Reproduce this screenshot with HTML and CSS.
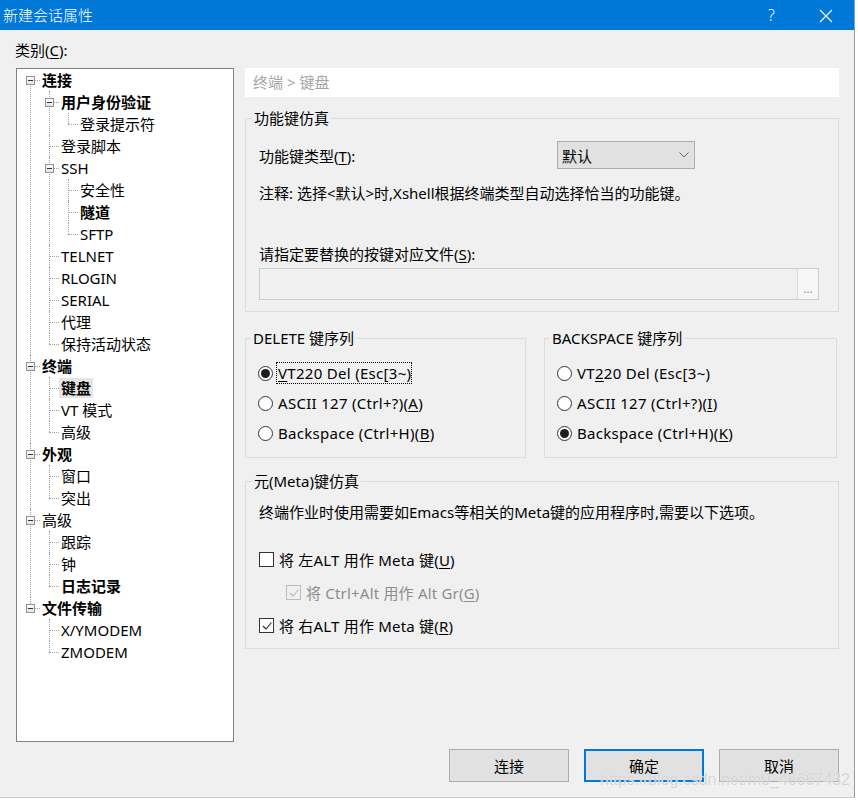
FILE: index.html
```html
<!DOCTYPE html>
<html lang="zh-CN">
<head>
<meta charset="utf-8">
<title>新建会话属性</title>
<link rel="stylesheet" href="styles.css">
</head>
<body>
<div class="window">
  <div class="titlebar">
    <span class="title">新建会话属性</span>
    <span class="help">?</span>
    <svg class="close" width="14" height="14" viewBox="0 0 14 14"><path d="M1 1 L13 13 M13 1 L1 13" stroke="#fff" stroke-width="1.1" fill="none"/></svg>
  </div>
  <div class="content">
    <div class="cat-label">类别(<u>C</u>):</div>
    <div class="panes">
      <div class="tree">
        <ul class="tree-root">
          <li>
            <div class="row"><span class="tog"></span><span class="txt b">连接</span></div>
            <ul>
              <li>
                <div class="row"><span class="tog"></span><span class="txt b">用户身份验证</span></div>
                <ul>
                  <li class="last"><div class="row"><span class="tog leaf"></span><span class="txt">登录提示符</span></div></li>
                </ul>
              </li>
              <li><div class="row"><span class="tog leaf"></span><span class="txt">登录脚本</span></div></li>
              <li>
                <div class="row"><span class="tog"></span><span class="txt">SSH</span></div>
                <ul>
                  <li><div class="row"><span class="tog leaf"></span><span class="txt">安全性</span></div></li>
                  <li><div class="row"><span class="tog leaf"></span><span class="txt b">隧道</span></div></li>
                  <li class="last"><div class="row"><span class="tog leaf"></span><span class="txt">SFTP</span></div></li>
                </ul>
              </li>
              <li><div class="row"><span class="tog leaf"></span><span class="txt">TELNET</span></div></li>
              <li><div class="row"><span class="tog leaf"></span><span class="txt">RLOGIN</span></div></li>
              <li><div class="row"><span class="tog leaf"></span><span class="txt">SERIAL</span></div></li>
              <li><div class="row"><span class="tog leaf"></span><span class="txt">代理</span></div></li>
              <li class="last"><div class="row"><span class="tog leaf"></span><span class="txt">保持活动状态</span></div></li>
            </ul>
          </li>
          <li>
            <div class="row"><span class="tog"></span><span class="txt b">终端</span></div>
            <ul>
              <li><div class="row"><span class="tog leaf"></span><span class="txt b sel">键盘</span></div></li>
              <li><div class="row"><span class="tog leaf"></span><span class="txt">VT 模式</span></div></li>
              <li class="last"><div class="row"><span class="tog leaf"></span><span class="txt">高级</span></div></li>
            </ul>
          </li>
          <li>
            <div class="row"><span class="tog"></span><span class="txt b">外观</span></div>
            <ul>
              <li><div class="row"><span class="tog leaf"></span><span class="txt">窗口</span></div></li>
              <li class="last"><div class="row"><span class="tog leaf"></span><span class="txt">突出</span></div></li>
            </ul>
          </li>
          <li>
            <div class="row"><span class="tog"></span><span class="txt">高级</span></div>
            <ul>
              <li><div class="row"><span class="tog leaf"></span><span class="txt">跟踪</span></div></li>
              <li><div class="row"><span class="tog leaf"></span><span class="txt">钟</span></div></li>
              <li class="last"><div class="row"><span class="tog leaf"></span><span class="txt b">日志记录</span></div></li>
            </ul>
          </li>
          <li class="last">
            <div class="row"><span class="tog"></span><span class="txt b">文件传输</span></div>
            <ul>
              <li><div class="row"><span class="tog leaf"></span><span class="txt">X/YMODEM</span></div></li>
              <li class="last"><div class="row"><span class="tog leaf"></span><span class="txt">ZMODEM</span></div></li>
            </ul>
          </li>
        </ul>
      </div>

      <div class="panel">
        <div class="crumb">终端 &gt; 键盘</div>

        <fieldset class="group g-func">
          <legend>功能键仿真</legend>
          <div class="type-row">
            <span>功能键类型(<u>T</u>):</span>
            <div class="select">
              <span>默认</span>
              <svg width="10" height="6" viewBox="0 0 10 6"><path d="M0.5 0.5 L5 5 L9.5 0.5" stroke="#666" stroke-width="1" fill="none"/></svg>
            </div>
          </div>
          <div class="note">注释: 选择&lt;默认&gt;时,Xshell根据终端类型自动选择恰当的功能键。</div>
          <div class="file-label">请指定要替换的按键对应文件(<u>S</u>):</div>
          <div class="file-input">
            <span class="field"></span>
            <span class="browse">...</span>
          </div>
        </fieldset>

        <div class="seq-row">
          <fieldset class="group g-seq">
            <legend>DELETE 键序列</legend>
            <div class="opt"><span class="radio on"></span><span class="focus"><u>V</u>T220 Del (Esc[3~)</span></div>
            <div class="opt"><span class="radio"></span><span>ASCII 127 (Ctrl+?)(<u>A</u>)</span></div>
            <div class="opt"><span class="radio"></span><span>Backspace (Ctrl+H)(<u>B</u>)</span></div>
          </fieldset>
          <fieldset class="group g-seq">
            <legend>BACKSPACE 键序列</legend>
            <div class="opt"><span class="radio"></span><span>VT<u>2</u>20 Del (Esc[3~)</span></div>
            <div class="opt"><span class="radio"></span><span>ASCII 127 (Ctrl+?)(<u>I</u>)</span></div>
            <div class="opt"><span class="radio on"></span><span>Backspace (Ctrl+H)(<u>K</u>)</span></div>
          </fieldset>
        </div>

        <fieldset class="group g-meta">
          <legend>元(Meta)键仿真</legend>
          <div class="note">终端作业时使用需要如Emacs等相关的Meta键的应用程序时,需要以下选项。</div>
          <div class="checks">
            <div class="chk-row"><span class="chk"></span><span>将 左ALT 用作 Meta 键(<u>U</u>)</span></div>
            <div class="chk-row sub disabled"><span class="chk"><svg width="12" height="12" viewBox="0 0 12 12"><path d="M2 6 L5 9 L10.5 2.5" stroke="#b5b5b5" stroke-width="1.1" fill="none"/></svg></span><span>将 Ctrl+Alt 用作 Alt Gr(<u>G</u>)</span></div>
            <div class="chk-row"><span class="chk"><svg width="12" height="12" viewBox="0 0 12 12"><path d="M2 6 L5 9 L10.5 2.5" stroke="#222" stroke-width="1.1" fill="none"/></svg></span><span>将 右ALT 用作 Meta 键(<u>R</u>)</span></div>
          </div>
        </fieldset>
      </div>
    </div>

    <div class="buttons">
      <button class="btn">连接</button>
      <button class="btn default">确定</button>
      <button class="btn">取消</button>
    </div>
  </div>
  <div class="watermark">https://blog.csdn.net/m0_46667432</div>
</div>
</body>
</html>
```

FILE: styles.css
```css
* { box-sizing: border-box; }

html, body {
  margin: 0;
  padding: 0;
  background: #ffffff;
}

body {
  font-family: "Noto Sans", "Noto Sans CJK SC", sans-serif;
  font-size: 15px;
  color: #000;
}

u { text-underline-offset: 2px; text-decoration-thickness: 1px; }

.window {
  position: relative;
  width: 855px;
  height: 798px;
  background: #f0f0f0;
  border-right: 1px solid #8d9aa8;
  border-bottom: 1px solid #c9c9c9;
  overflow: hidden;
}

/* title bar */
.titlebar {
  height: 30px;
  background: #0078d7;
  color: #fff;
  display: flex;
  align-items: center;
  padding-left: 3px;
}
.title {
  font-size: 15px;
  line-height: 30px;
  flex: 1;
  font-family: "Noto Sans CJK SC", sans-serif;
  font-weight: 300;
}
.help {
  font-family: "Noto Sans", sans-serif;
  font-weight: 300;
  font-size: 16px;
  width: 51px;
}
.close {
  margin-right: 21px;
  margin-top: 1px;
}

/* content */
.content {
  padding: 0 15px 0 16px;
}
.cat-label {
  line-height: 20px;
  margin-top: 10px;
  margin-bottom: 8px;
  margin-left: -1px;
}

.panes {
  display: flex;
  gap: 11px;
}

/* tree */
.tree {
  width: 218px;
  height: 674px;
  background: #fff;
  border: 1px solid #838383;
  overflow: hidden;
}
.tree ul {
  list-style: none;
  margin: 0;
  padding: 0;
}
.tree ul ul {
  padding-left: 19px;
}
.tree li {
  position: relative;
}
.tree li::before {
  content: "";
  position: absolute;
  left: 13px;
  top: 11px;
  width: 10px;
  border-top: 1px dotted #a0a0a0;
}
.tree li::after {
  content: "";
  position: absolute;
  left: 13px;
  top: 0;
  bottom: 0;
  border-left: 1px dotted #a0a0a0;
}
.tree li.last::after {
  bottom: auto;
  height: 11px;
}
.tree-root > li:first-child::after {
  top: 11px;
}
.row {
  height: 22px;
  display: flex;
  align-items: center;
  padding-left: 9px;
  position: relative;
  z-index: 1;
}
.tog {
  position: relative;
  width: 9px;
  height: 9px;
  border: 1px solid #919191;
  background: linear-gradient(#ffffff, #e4e4e4);
  margin-right: 7px;
  flex: none;
}
.tog::before {
  content: "";
  position: absolute;
  left: 1px;
  top: 3px;
  width: 5px;
  height: 1px;
  background: #333;
}
.tog.leaf {
  visibility: hidden;
}
.txt {
  line-height: 20px;
  white-space: nowrap;
}
.txt.b { font-weight: 700; }
.txt.sel {
  background: #e5e5e5;
  padding: 0 2px;
  margin-left: -2px;
}

/* right panel */
.panel {
  width: 594px;
  display: flex;
  flex-direction: column;
}
.crumb {
  height: 29px;
  background: #fff;
  color: #a6a6a6;
  line-height: 29px;
  padding-left: 8px;
}

.group {
  margin: 0;
  border: 1px solid #dcdcdc;
  padding: 0 12px 0 13px;
  min-width: 0;
}
.group legend {
  line-height: 20px;
  padding: 0 2px;
  margin-left: -7px;
}

.g-func {
  margin-top: 11px;
  padding-bottom: 11px;
}
.type-row {
  margin-top: 13px;
  display: flex;
  align-items: center;
  height: 28px;
}
.type-row > span {
  width: 298px;
  line-height: 20px;
  padding-top: 2px;
}
.select {
  width: 138px;
  height: 28px;
  background: #e1e1e1;
  border: 1px solid #adadad;
  display: flex;
  align-items: center;
  justify-content: space-between;
  padding: 0 5px 0 4px;
}
.note {
  line-height: 20px;
  margin-top: 14px;
  white-space: nowrap;
}
.file-label {
  line-height: 20px;
  margin-top: 41px;
}
.file-input {
  margin-top: 4px;
  width: 560px;
  height: 32px;
  border: 1px solid #cccccc;
  display: flex;
  background: #f0f0f0;
}
.field { flex: 1; }
.browse {
  width: 21px;
  border-left: 1px solid #d9d9d9;
  background: #f7f7f7;
  color: #808080;
  font-size: 11px;
  line-height: 11px;
  display: flex;
  align-items: flex-end;
  justify-content: center;
  padding-bottom: 5px;
}

.seq-row {
  margin-top: 16px;
  display: grid;
  grid-template-columns: 281px 293px;
  gap: 18px;
}
.g-seq {
  padding-left: 12px;
  padding-bottom: 9px;
}
.opt {
  height: 30px;
  display: flex;
  align-items: center;
  white-space: nowrap;
  letter-spacing: 0.3px;
}
.opt:first-of-type { margin-top: 10px; }
.radio {
  width: 15px;
  height: 15px;
  border-radius: 50%;
  border: 1px solid #333;
  background: #fff;
  margin-right: 5px;
  flex: none;
  display: flex;
  align-items: center;
  justify-content: center;
}
.radio.on::before {
  content: "";
  width: 9px;
  height: 9px;
  border-radius: 50%;
  background: #1e1e1e;
}
.focus {
  outline: 1px dotted #000;
  outline-offset: 0;
  line-height: 20px;
  margin-left: -1px;
  padding-left: 1px;
}

.g-meta {
  margin-top: 13px;
  padding-bottom: 6px;
}
.g-meta .note { margin-top: 11px; }
.checks { margin-top: 21px; }
.chk-row {
  height: 33px;
  display: flex;
  align-items: center;
  white-space: nowrap;
  letter-spacing: 0.2px;
}
.chk {
  width: 15px;
  height: 15px;
  border: 1px solid #333;
  background: #fff;
  margin-right: 5px;
  flex: none;
  display: flex;
  align-items: center;
  justify-content: center;
}
.chk-row.sub { padding-left: 27px; }
.chk-row.disabled { color: #8c8c8c; }
.chk-row.disabled .chk { border-color: #bcbcbc; background: #f0f0f0; }

/* buttons */
.buttons {
  margin-top: 7px;
  display: flex;
  justify-content: flex-end;
  gap: 15px;
}
.btn {
  width: 120px;
  height: 33px;
  background: #e1e1e1;
  border: 1px solid #adadad;
  font-family: "Noto Sans CJK SC", sans-serif;
  font-size: 15px;
  line-height: 16px;
  color: #000;
  padding: 0;
}
.btn.default {
  border: 2px solid #0078d7;
}

.watermark {
  position: absolute;
  left: 600px;
  top: 774px;
  font-family: "Liberation Sans", Arial, sans-serif;
  font-size: 16px;
  line-height: 12px;
  color: rgba(205, 205, 205, 0.85);
  text-shadow: 0 0 1px rgba(255,255,255,0.9);
  white-space: nowrap;
}
```
